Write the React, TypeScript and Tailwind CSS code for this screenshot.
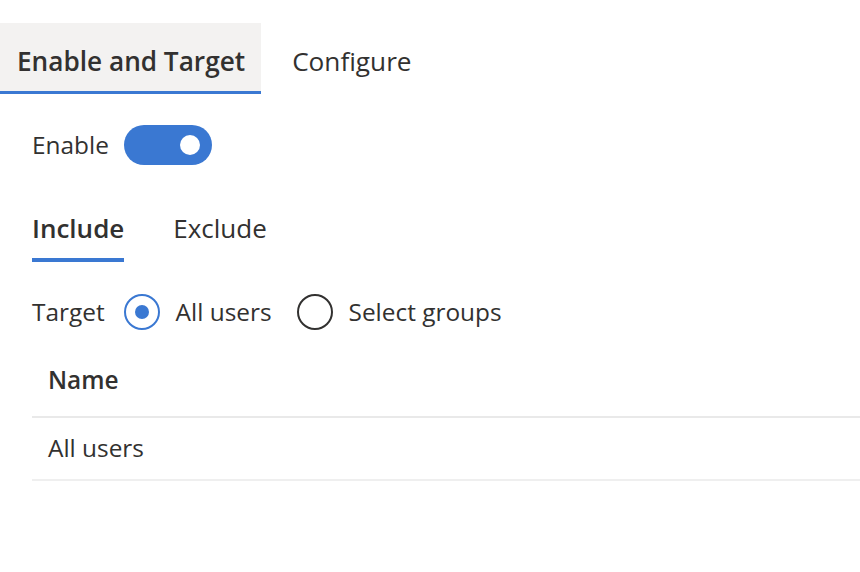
import { useState } from 'react'

function Radio({ checked }: { checked: boolean }) {
  return (
    <span
      className={`flex h-[36px] w-[36px] items-center justify-center rounded-full border-2 ${
        checked ? 'border-[#3a78d2]' : 'border-[#323130]'
      }`}
    >
      {checked && <span className="h-[14px] w-[14px] rounded-full bg-[#3a78d2]" />}
    </span>
  )
}

export default function App() {
  const [enabled, setEnabled] = useState(true)
  const [target, setTarget] = useState<'all' | 'groups'>('all')

  return (
    <div className="h-[572px] w-[860px] bg-white pt-[23px] text-[24.4px] text-[#323130]" style={{ fontFamily: '"Open Sans", "Noto Sans", sans-serif' }}>
      {/* Top tabs */}
      <div className="flex h-[71px] text-[26.2px]">
        <div className="flex items-center border-b-[3px] border-[#3a78d2] bg-[#f3f2f1] pl-[17px] pr-[16px] pt-[10px] font-semibold">
          Enable and Target
        </div>
        <div className="flex items-center pl-[31px] pt-[10px] pb-[3px]">Configure</div>
      </div>

      <div className="pl-[32px]">
        {/* Enable toggle */}
        <div className="mt-[31px] flex items-center gap-[15px]">
          <span>Enable</span>
          <button
            onClick={() => setEnabled(!enabled)}
            className={`flex h-[40px] w-[88px] items-center rounded-full px-[12px] ${
              enabled ? 'justify-end bg-[#3a78d2]' : 'justify-start border-2 border-[#323130] bg-white'
            }`}
          >
            <span className={`h-[20px] w-[20px] rounded-full ${enabled ? 'bg-white' : 'bg-[#323130]'}`} />
          </button>
        </div>

        {/* Include / Exclude */}
        <div className="mt-[44px] flex gap-[49px] text-[26px]">
          <div className="border-b-4 border-[#3a78d2] pb-[10px] font-semibold">Include</div>
          <div className="pb-[14px]">Exclude</div>
        </div>

        {/* Target */}
        <div className="mt-[32px] flex items-center">
          <span className="mr-[19px]">Target</span>
          <button onClick={() => setTarget('all')} className="flex items-center gap-[16px]">
            <Radio checked={target === 'all'} />
            <span>All users</span>
          </button>
          <button onClick={() => setTarget('groups')} className="ml-[25px] flex items-center gap-[16px]">
            <Radio checked={target === 'groups'} />
            <span>Select groups</span>
          </button>
        </div>

        {/* Table */}
        <div className="mt-[15px]">
          <div className="flex h-[72px] items-center border-b-2 border-[#e9e9e9] pl-[16px] font-semibold">Name</div>
          <div className="flex h-[63px] items-center border-b-2 border-[#efefef] pl-[16px]">All users</div>
        </div>
      </div>
    </div>
  )
}
